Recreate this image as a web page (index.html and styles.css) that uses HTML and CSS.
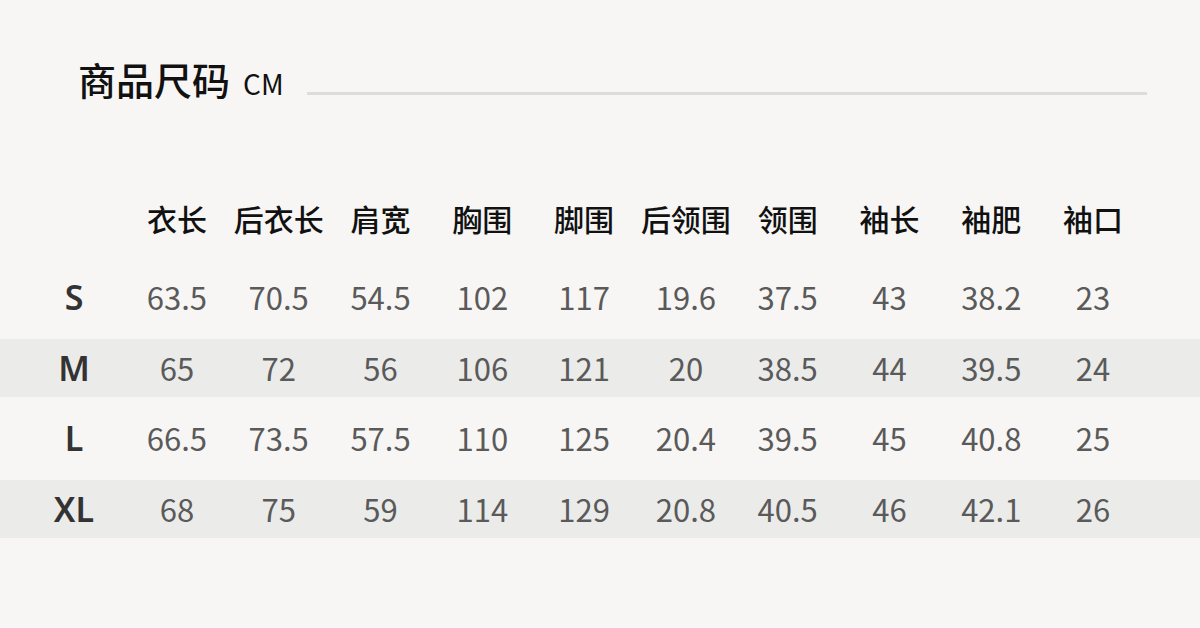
FILE: index.html
```html
<!DOCTYPE html>
<html lang="zh-CN">
<head>
<meta charset="utf-8">
<link rel="stylesheet" href="styles.css">
</head>
<body>
<div class="page">
  <div class="title-bar">
    <h1 class="title">商品尺码<span class="unit">CM</span></h1>
    <div class="rule"></div>
  </div>
  <div class="table">
    <div class="row head">
      <div class="cell"></div>
      <div class="cell">衣长</div>
      <div class="cell">后衣长</div>
      <div class="cell">肩宽</div>
      <div class="cell">胸围</div>
      <div class="cell">脚围</div>
      <div class="cell">后领围</div>
      <div class="cell">领围</div>
      <div class="cell">袖长</div>
      <div class="cell">袖肥</div>
      <div class="cell">袖口</div>
    </div>
    <div class="row">
      <div class="cell size">S</div>
      <div class="cell">63.5</div><div class="cell">70.5</div><div class="cell">54.5</div><div class="cell">102</div><div class="cell">117</div><div class="cell">19.6</div><div class="cell">37.5</div><div class="cell">43</div><div class="cell">38.2</div><div class="cell">23</div>
    </div>
    <div class="row stripe">
      <div class="cell size">M</div>
      <div class="cell">65</div><div class="cell">72</div><div class="cell">56</div><div class="cell">106</div><div class="cell">121</div><div class="cell">20</div><div class="cell">38.5</div><div class="cell">44</div><div class="cell">39.5</div><div class="cell">24</div>
    </div>
    <div class="row">
      <div class="cell size">L</div>
      <div class="cell">66.5</div><div class="cell">73.5</div><div class="cell">57.5</div><div class="cell">110</div><div class="cell">125</div><div class="cell">20.4</div><div class="cell">39.5</div><div class="cell">45</div><div class="cell">40.8</div><div class="cell">25</div>
    </div>
    <div class="row stripe">
      <div class="cell size">XL</div>
      <div class="cell">68</div><div class="cell">75</div><div class="cell">59</div><div class="cell">114</div><div class="cell">129</div><div class="cell">20.8</div><div class="cell">40.5</div><div class="cell">46</div><div class="cell">42.1</div><div class="cell">26</div>
    </div>
  </div>
</div>
</body>
</html>
```
FILE: styles.css
```css
* { box-sizing: border-box; }
html, body {
  margin: 0;
  padding: 0;
  background: #f7f6f4;
}
body {
  width: 1200px;
  height: 628px;
  overflow: hidden;
  font-family: "Noto Sans CJK SC", "Noto Sans", sans-serif;
}
.page {
  padding-top: 58px;
}
.title-bar {
  display: flex;
  align-items: flex-end;
  padding: 0 53px 0 78px;
  height: 50px;
}
.title {
  margin: 0;
  font-size: 38px;
  font-weight: 500;
  color: #111;
  line-height: 50px;
  white-space: nowrap;
}
.unit {
  font-size: 28px;
  font-weight: 400;
  margin-left: 13px;
}
.rule {
  flex: 1;
  height: 3px;
  background: #dcdcdc;
  margin: 0 0 13px 23px;
}
.table {
  margin-top: 81px;
}
.row {
  display: grid;
  grid-template-columns: 104px repeat(10, 101.8px);
  padding-left: 22px;
  height: 58px;
  align-items: center;
  margin-bottom: 12.5px;
}
.row.head {
  margin-bottom: 21px;
}
.row.stripe {
  background: #ebebea;
}
.cell {
  text-align: center;
  font-size: 31px;
  font-weight: 400;
  color: #5a5a5a;
  line-height: 58px;
  padding-bottom: 6px;
  white-space: nowrap;
}
.head .cell {
  font-size: 30px;
  font-weight: 500;
  color: #111;
  padding-bottom: 0;
}
.cell.size {
  font-family: "Noto Sans", sans-serif;
  font-weight: 600;
  color: #333;
  font-size: 34px;
}
```
